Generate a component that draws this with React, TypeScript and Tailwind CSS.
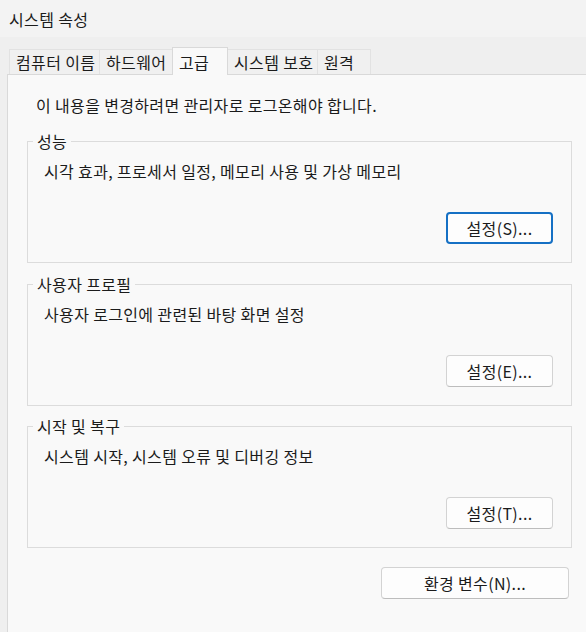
import React from 'react';

const font = { fontFamily: '"Noto Sans CJK KR", "Noto Sans", sans-serif' };

const Tab: React.FC<{ label: string; className: string; active?: boolean }> = ({ label, className, active }) => (
  <div
    className={
      active
        ? `relative z-10 -mb-px flex h-[28px] items-center border-l border-r border-t border-[#d9d9d9] bg-[#f9f9f9] pl-[6px] ${className}`
        : `flex h-[25px] items-center border-t border-[#e2e2e2] bg-[#f0f0f0] pl-[6px] ${className}`
    }
  >
    <span className="whitespace-nowrap leading-5">{label}</span>
  </div>
);

const Button: React.FC<{ label: string; width: string; focused?: boolean }> = ({ label, width, focused }) => (
  <button
    className={`flex h-[32px] items-center justify-center rounded-[4px] bg-[#fdfdfd] leading-5 text-[#1b1b1b] ${width} ${
      focused ? 'border-2 border-[#1570c4]' : 'border border-[#d3d3d3] border-b-[#bdbdbd]'
    }`}
  >
    {label}
  </button>
);

const Group: React.FC<{ title: string; text: string; button: string; focused?: boolean; className?: string }> = ({
  title,
  text,
  button,
  focused,
  className = '',
}) => (
  <fieldset className={`border border-[#dcdcdc] px-0 pb-[18px] ${className}`}>
    <legend className="ml-[5px] px-1 leading-5">{title}</legend>
    <p className="ml-[16px] mt-[10px] leading-5">{text}</p>
    <div className="mt-[31px] flex justify-end pr-[18px]">
      <Button label={button} width="w-[107px]" focused={focused} />
    </div>
  </fieldset>
);

export default function App() {
  return (
    <div
      className="flex h-[632px] w-[586px] flex-col overflow-hidden bg-[#efefef] text-[16px] tracking-[0.35px] text-[#1b1b1b]"
      style={font}
    >
      {/* title bar */}
      <div className="h-[37px] bg-[#f3f3f3] pl-[9px] pt-[7px]">
        <span className="leading-5">시스템 속성</span>
      </div>

      {/* tabs */}
      <div className="flex h-[37px] items-end pl-[9px]">
        <Tab label="컴퓨터 이름" className="w-[91px] border-l border-r" />
        <Tab label="하드웨어" className="w-[72px]" />
        <Tab label="고급" className="w-[56px]" active />
        <Tab label="시스템 보호" className="w-[90px] border-r" />
        <Tab label="원격" className="w-[53px] border-r" />
      </div>

      {/* panel */}
      <div className="ml-[7px] flex flex-1 flex-col border-l border-t border-[#d9d9d9] bg-[#f9f9f9] pl-[19px] pr-[14px] pt-[20px]">
        <p className="ml-[9px] leading-5">이 내용을 변경하려면 관리자로 로그온해야 합니다.</p>

        <Group
          className="mt-[16px]"
          title="성능"
          text="시각 효과, 프로세서 일정, 메모리 사용 및 가상 메모리"
          button="설정(S)..."
          focused
        />
        <Group
          className="mt-[11px]"
          title="사용자 프로필"
          text="사용자 로그인에 관련된 바탕 화면 설정"
          button="설정(E)..."
        />
        <Group
          className="mt-[10px]"
          title="시작 및 복구"
          text="시스템 시작, 시스템 오류 및 디버깅 정보"
          button="설정(T)..."
        />

        <div className="mr-[3px] mt-[19px] flex justify-end">
          <Button label="환경 변수(N)..." width="w-[188px]" />
        </div>
      </div>
    </div>
  );
}
